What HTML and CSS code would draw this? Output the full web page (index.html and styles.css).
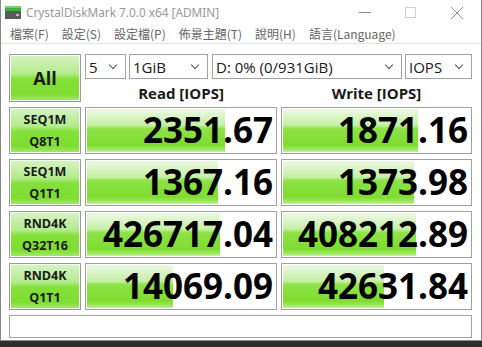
FILE: index.html
```html
<!DOCTYPE html>
<html lang="zh-Hant">
<head>
    <meta charset="UTF-8">
    <title>CrystalDiskMark 7.0.0 x64 [ADMIN]</title>
    <link rel="stylesheet" href="styles.css">
</head>
<body>
    <div class="window">
        <!-- Title Bar -->
        <div class="titlebar">
            <svg class="app-icon" width="16" height="13" viewBox="0 0 16 13">
                <rect x="0" y="0" width="16" height="5" fill="#3cb43c"/>
                <rect x="0" y="0" width="16" height="2" fill="#6fd26f"/>
                <rect x="0" y="5" width="16" height="8" fill="#5a5a5a"/>
                <rect x="11" y="8" width="3" height="2" fill="#bcbcbc"/>
            </svg>
            <span class="title">CrystalDiskMark 7.0.0 x64 [ADMIN]</span>
            <div class="caption-buttons">
                <svg width="46" height="24" viewBox="0 0 46 24"><line x1="17" y1="12.5" x2="29" y2="12.5" stroke="#8c8c8c"/></svg>
                <svg width="46" height="24" viewBox="0 0 46 24"><rect x="17.5" y="7.5" width="10" height="10" fill="none" stroke="#d0d0d0"/></svg>
                <svg width="46" height="24" viewBox="0 0 46 24"><path d="M17 7 L29 19 M29 7 L17 19" stroke="#8c8c8c" fill="none"/></svg>
            </div>
        </div>

        <!-- Menu Bar -->
        <ul class="menubar">
            <li>檔案(F)</li>
            <li>設定(S)</li>
            <li>設定檔(P)</li>
            <li>佈景主題(T)</li>
            <li>說明(H)</li>
            <li>語言(Language)</li>
        </ul>

        <!-- Benchmark Area -->
        <div class="client">
            <div class="run-btn all">All</div>
            <div class="controls">
                <div class="combo w-count">5<span class="chev"></span></div>
                <div class="combo w-size">1GiB<span class="chev"></span></div>
                <div class="combo w-drive">D: 0% (0/931GiB)<span class="chev"></span></div>
                <div class="combo w-unit">IOPS<span class="chev"></span></div>
            </div>
            <div class="col-head">Read [IOPS]</div>
            <div class="col-head">Write [IOPS]</div>

            <div class="run-btn">SEQ1M<br>Q8T1</div>
            <div class="meter" style="--w: 139px">2351.67</div>
            <div class="meter" style="--w: 136px">1871.16</div>

            <div class="run-btn">SEQ1M<br>Q1T1</div>
            <div class="meter" style="--w: 132px">1367.16</div>
            <div class="meter" style="--w: 132px">1373.98</div>

            <div class="run-btn">RND4K<br>Q32T16</div>
            <div class="meter" style="--w: 134px">426717.04</div>
            <div class="meter" style="--w: 134px">408212.89</div>

            <div class="run-btn">RND4K<br>Q1T1</div>
            <div class="meter" style="--w: 87px">14069.09</div>
            <div class="meter" style="--w: 102px">42631.84</div>

            <div class="status"></div>
        </div>
    </div>
</body>
</html>
```

FILE: styles.css
```css
/* Desktop behind the window */
body {
    margin: 0;
    background-color: #2e2e2e;
    font-family: "Noto Sans", "Noto Sans CJK TC", sans-serif;
    color: #1a1a1a;
}

.window {
    width: 480px;
    height: 340px;
    background: #fff;
    border: 1px solid #8a8a8a;
    border-top: none;
}

/* Title Bar */
.titlebar {
    display: flex;
    align-items: center;
    height: 24px;
}

.app-icon {
    margin: 1px 0 0 4px;
}

.title {
    margin-left: 5px;
    font-size: 11.8px;
    color: #999;
}

.caption-buttons {
    display: flex;
    margin-left: auto;
    margin-right: 1px;
}

/* Menu Bar */
.menubar {
    display: flex;
    gap: 13px;
    height: 19px;
    margin: 0;
    padding: 0 0 0 9px;
    list-style: none;
    font-family: "Noto Sans CJK TC", sans-serif;
    font-size: 12px;
    line-height: 19px;
    color: #666;
    border-bottom: 1px solid #e3e3e3;
}

/* Benchmark Grid */
.client {
    display: grid;
    grid-template-columns: 72px 192px 191px;
    grid-template-rows: 25px 18px repeat(4, 47px) 23px;
    gap: 5px 4px;
    padding: 10px 8px 0 8px;
    font-family: "Open Sans", "Noto Sans", sans-serif;
}

.run-btn {
    box-sizing: border-box;
    display: flex;
    align-items: center;
    justify-content: center;
    text-align: center;
    border: 1px solid #9c9c9c;
    box-shadow: inset 0 0 0 1px #f4fff0;
    background: linear-gradient(#d6f3c6 0%, #b4ec8c 40%, #84e03a 52%, #7edd30 85%, #a8ea70 100%);
    font-size: 12.5px;
    font-weight: 700;
    line-height: 22px;
}

.run-btn.all {
    grid-row: 1 / 3;
    font-size: 18px;
}

.controls {
    grid-column: 2 / 4;
    display: flex;
    justify-content: space-between;
}

.combo {
    box-sizing: border-box;
    display: flex;
    align-items: center;
    padding-left: 3px;
    border: 1px solid #a2a2a2;
    background: #fff;
    font-size: 15px;
}

.w-count { width: 41px; }
.w-size { width: 79px; margin-right: 1px; }
.w-drive { width: 190px; }
.w-unit { width: 67px; }

.chev {
    width: 5px;
    height: 5px;
    margin: -4px 9px 0 auto;
    border-right: 1px solid #555;
    border-bottom: 1px solid #555;
    transform: rotate(45deg);
}

.col-head {
    text-align: center;
    font-size: 15px;
    font-weight: 700;
    line-height: 18px;
}

/* Result meters */
.meter {
    box-sizing: border-box;
    border: 1px solid #a0a0a0;
    box-shadow: inset 0 0 0 1px #fff;
    background: linear-gradient(#eef9e8 0%, #c6f0a6 38%, #8ee248 46%, #7edd2e 82%, #a6ea6c 94%, #e6f8da 100%) no-repeat, #fff;
    background-size: var(--w) 100%;
    text-align: right;
    padding-right: 3px;
    font-size: 35px;
    font-weight: 700;
    line-height: 44px;
    color: #000;
}

.status {
    grid-column: 1 / 4;
    border: 1px solid #a0a0a0;
    background: #fff;
}
```
